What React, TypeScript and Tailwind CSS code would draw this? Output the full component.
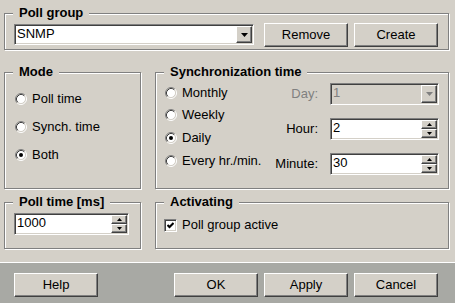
import React from 'react';

const raised =
  'border border-t-white border-l-white border-r-[#404040] border-b-[#404040] shadow-[inset_-1px_-1px_0_#808080] bg-[#d4d0c8]';
const sunken =
  'border border-t-[#808080] border-l-[#808080] border-r-white border-b-white shadow-[inset_1px_1px_0_#404040,inset_-1px_-1px_0_#d4d0c8]';

const Group = ({ title, className, children }: { title: string; className: string; children?: React.ReactNode }) => (
  <div className={`relative border border-[#808080] shadow-[inset_1px_1px_0_#fff,1px_1px_0_#fff] ${className}`}>
    <span className="absolute left-[8px] top-[-8px] bg-[#d4d0c8] px-[6px] text-[13px] font-bold leading-[14px]">
      {title}
    </span>
    {children}
  </div>
);

const Down = ({ color = '#000' }: { color?: string }) => (
  <svg width="7" height="4" viewBox="0 0 7 4">
    <polygon points="0,0 7,0 3.5,4" fill={color} />
  </svg>
);

const SpinArrow = ({ up }: { up?: boolean }) => (
  <svg width="5" height="3" viewBox="0 0 5 3">
    <polygon points={up ? '0,3 5,3 2.5,0' : '0,0 5,0 2.5,3'} fill="#000" />
  </svg>
);

const Radio = ({ checked, label }: { checked?: boolean; label: string }) => (
  <div className="flex h-[16px] items-center gap-[5px]">
    <svg width="12" height="12" viewBox="0 0 12 12" className="shrink-0">
      <circle cx="6" cy="6" r="4.5" fill="#fff" />
      <path d="M2.11 9.89 A5.5 5.5 0 0 1 9.89 2.11" stroke="#808080" fill="none" />
      <path d="M9.89 2.11 A5.5 5.5 0 0 1 2.11 9.89" stroke="#fff" fill="none" />
      <path d="M2.82 9.18 A4.5 4.5 0 0 1 9.18 2.82" stroke="#404040" fill="none" />
      <path d="M9.18 2.82 A4.5 4.5 0 0 1 2.82 9.18" stroke="#d4d0c8" fill="none" />
      {checked && <circle cx="6" cy="6" r="2" fill="#000" />}
    </svg>
    <span className="text-[13px] leading-[16px]">{label}</span>
  </div>
);

const Spin = ({ value, className }: { value: string; className: string }) => (
  <div className={`flex h-[22px] bg-white ${sunken} ${className}`}>
    <span className="flex-1 pl-[2px] pt-[1px] text-[13px] leading-[16px]">{value}</span>
    <div className="m-[1px] flex w-[16px] flex-col">
      <div className={`flex flex-1 items-center justify-center ${raised}`}>
        <SpinArrow up />
      </div>
      <div className={`flex flex-1 items-center justify-center ${raised}`}>
        <SpinArrow />
      </div>
    </div>
  </div>
);

const Button = ({ label, className = '' }: { label: string; className?: string }) => (
  <button className={`flex h-[24px] w-[84px] items-center justify-center text-[13px] leading-[16px] ${raised} ${className}`}>
    {label}
  </button>
);

export default function App() {
  return (
    <div className="flex h-[303px] w-[455px] flex-col overflow-hidden bg-[#d4d0c8] font-['Liberation_Sans',Arial,sans-serif] text-black">
      <div className="h-[262px] pl-[4px] pt-[13px]">
        <Group title="Poll group" className="h-[37px] w-[445px]">
          <div className="flex items-start pl-[9px] pt-[9px]">
            <div className={`mt-[1px] flex h-[21px] w-[240px] bg-white ${sunken}`}>
              <span className="flex-1 pl-[2px] pt-[1px] text-[13px] leading-[16px]">SNMP</span>
              <div className={`m-[1px] flex w-[16px] items-center justify-center ${raised}`}>
                <Down />
              </div>
            </div>
            <Button label="Remove" className="ml-[10px]" />
            <Button label="Create" className="ml-[6px]" />
          </div>
        </Group>

        <div className="mt-[22px] flex gap-[14px]">
          <Group title="Mode" className="h-[117px] w-[137px]">
            <div className="flex flex-col gap-[12px] pl-[10px] pt-[18px]">
              <Radio label="Poll time" />
              <Radio label="Synch. time" />
              <Radio label="Both" checked />
            </div>
          </Group>

          <Group title="Synchronization time" className="h-[117px] w-[294px]">
            <div className="flex">
              <div className="flex flex-col pl-[9px] pt-[12px]">
                <Radio label="Monthly" />
                <div className="mt-[6px]">
                  <Radio label="Weekly" />
                </div>
                <div className="mt-[7px]">
                  <Radio label="Daily" checked />
                </div>
                <div className="mt-[7px]">
                  <Radio label="Every hr./min." />
                </div>
              </div>
              <div className="ml-auto flex flex-col gap-[13px] pr-[9px] pt-[10px]">
                <div className="flex h-[22px] items-center justify-end">
                  <span className="text-[13px] leading-[16px] text-[#808080]">Day:</span>
                  <div className={`ml-[12px] flex h-[22px] w-[109px] bg-[#d4d0c8] ${sunken}`}>
                    <span className="flex-1 pl-[2px] pt-[1px] text-[13px] leading-[16px] text-[#808080]">1</span>
                    <div className={`m-[1px] flex w-[16px] items-center justify-center ${raised}`}>
                      <Down color="#808080" />
                    </div>
                  </div>
                </div>
                <div className="flex h-[22px] items-center justify-end">
                  <span className="text-[13px] leading-[16px]">Hour:</span>
                  <Spin value="2" className="ml-[12px] w-[109px]" />
                </div>
                <div className="flex h-[22px] items-center justify-end">
                  <span className="text-[13px] leading-[16px]">Minute:</span>
                  <Spin value="30" className="ml-[12px] w-[109px]" />
                </div>
              </div>
            </div>
          </Group>
        </div>

        <div className="mt-[13px] flex gap-[14px]">
          <Group title="Poll time [ms]" className="h-[47px] w-[137px]">
            <div className="pl-[9px] pt-[10px]">
              <Spin value="1000" className="w-[115px]" />
            </div>
          </Group>
          <Group title="Activating" className="h-[47px] w-[294px]">
            <div className="flex items-center gap-[5px] pl-[8px] pt-[14px]">
              <div className={`flex h-[13px] w-[13px] items-center justify-center bg-white ${sunken}`}>
                <svg width="7" height="7" viewBox="0 0 7 7">
                  <polyline points="0.5,3 2.5,5 6.5,1" stroke="#000" strokeWidth="2" fill="none" />
                </svg>
              </div>
              <span className="text-[13px] leading-[16px]">Poll group active</span>
            </div>
          </Group>
        </div>
      </div>

      <div className="flex h-[41px] border-t border-white bg-[#a8a9a4] pl-[14px] pt-[10px]">
        <Button label="Help" />
        <Button label="OK" className="ml-[76px]" />
        <Button label="Apply" className="ml-[6px]" />
        <Button label="Cancel" className="ml-[6px]" />
      </div>
    </div>
  );
}
